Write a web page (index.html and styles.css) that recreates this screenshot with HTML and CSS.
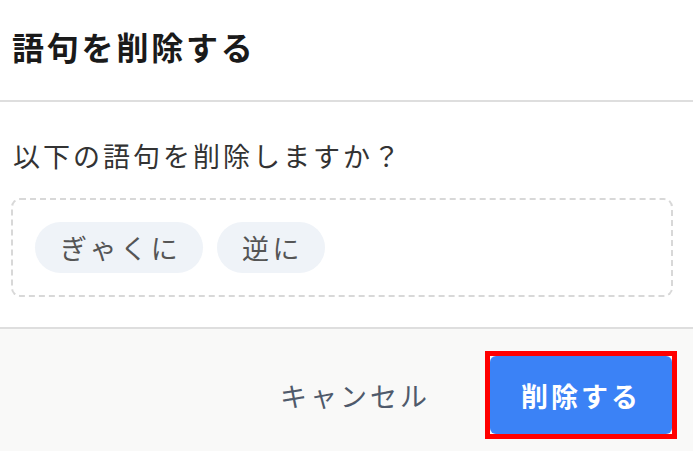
FILE: index.html
```html
<!DOCTYPE html>
<html lang="ja">
<head>
<meta charset="utf-8">
<link rel="stylesheet" href="styles.css">
</head>
<body>
<div class="dialog">
  <header class="dialog-header">
    <h1 class="dialog-title">語句を削除する</h1>
  </header>
  <section class="dialog-body">
    <p class="message">以下の語句を削除しますか？</p>
    <div class="term-box">
      <span class="chip">ぎゃくに</span>
      <span class="chip">逆に</span>
    </div>
  </section>
  <footer class="dialog-footer">
    <button class="btn btn-cancel">キャンセル</button>
    <span class="highlight"><button class="btn btn-danger">削除する</button></span>
  </footer>
</div>
</body>
</html>
```
FILE: styles.css
```css
html, body {
  margin: 0;
  padding: 0;
  background: #ffffff;
}
body {
  font-family: "Noto Sans CJK JP", "Noto Sans", sans-serif;
  color: #222;
}
.dialog {
  width: 693px;
  height: 451px;
  display: flex;
  flex-direction: column;
  overflow: hidden;
}
.dialog-header {
  height: 102px;
  box-sizing: border-box;
  display: flex;
  align-items: center;
  padding: 0 12px 8px;
  border-bottom: 2px solid #dedede;
}
.dialog-title {
  margin: 0;
  font-size: 32px;
  font-weight: 700;
  letter-spacing: 2.8px;
  color: #1a1a1a;
  line-height: 1;
}
.dialog-body {
  padding: 36px 20px 30px 11px;
  display: flex;
  flex-direction: column;
}
.message {
  margin: 0 0 0 2px;
  font-size: 27px;
  letter-spacing: 3px;
  line-height: 36px;
  color: #333;
}
.term-box {
  margin-top: 24px;
  height: 99px;
  box-sizing: border-box;
  border: 2px dashed #d8d8d8;
  border-radius: 9px;
  display: flex;
  align-items: center;
  gap: 14px;
  padding: 0 0 0 22px;
}
.chip {
  display: inline-flex;
  align-items: center;
  height: 51px;
  padding: 0 22px 0 25px;
  border-radius: 26px;
  background: #eff3f8;
  color: #555;
  font-size: 27px;
  letter-spacing: 3.4px;
}
.dialog-footer {
  flex: 1;
  background: #f9f9f8;
  border-top: 2px solid #dedede;
  display: flex;
  align-items: flex-start;
  justify-content: flex-end;
  padding: 22px 16px 0 0;
  gap: 55px;
}
.btn {
  font-family: inherit;
  border: none;
  cursor: pointer;
}
.btn-cancel {
  background: transparent;
  color: #4f5a6b;
  font-size: 27px;
  letter-spacing: 3px;
  padding: 0;
  height: 88px;
}
.highlight {
  display: block;
  border: 5px solid #ff0000;
  line-height: 0;
}
.btn-danger {
  width: 182px;
  height: 78px;
  background: #3b82f6;
  color: #ffffff;
  font-size: 27px;
  font-weight: 700;
  letter-spacing: 3px;
  border-radius: 6px;
  line-height: 1;
}
```
